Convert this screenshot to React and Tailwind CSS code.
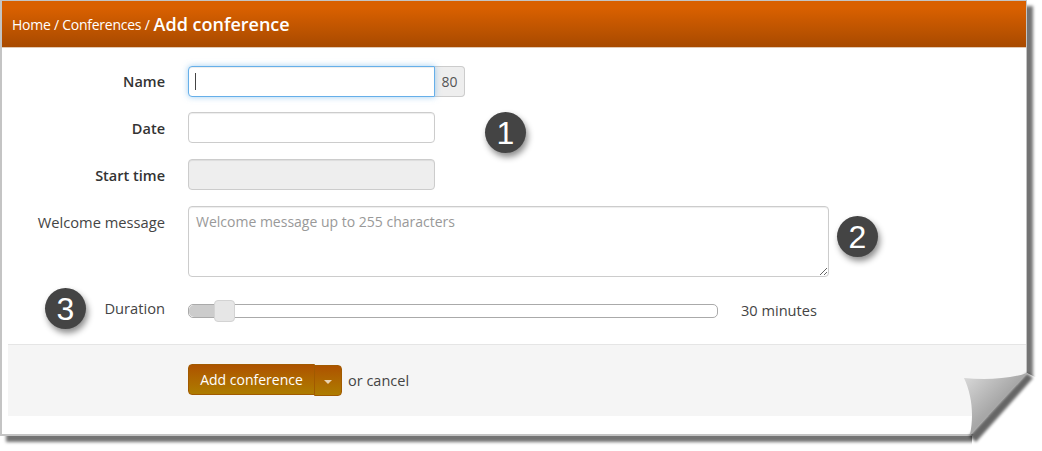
import React from "react";

const font = { fontFamily: '"Open Sans", "Liberation Sans", sans-serif' };

function Badge({ n, className }) {
  return (
    <div
      className={
        "absolute w-[41px] h-[41px] rounded-full bg-[#444444] text-white flex items-center justify-center text-[32px] leading-none shadow-[2px_4px_6px_rgba(0,0,0,0.45)] " +
        className
      }
      style={{ fontFamily: '"Liberation Sans", sans-serif' }}
    >
      {n}
    </div>
  );
}

function Row({ label, bold, className, labelClass = "", children }) {
  return (
    <div className={"flex " + className}>
      <div
        className={
          "w-[163px] shrink-0 text-right " +
          (bold ? "text-[14.5px] font-semibold text-[#333333] " : "text-[14.7px] text-[#444444] ") +
          labelClass
        }
      >
        {label}
      </div>
      <div className="ml-[23px] flex items-start">{children}</div>
    </div>
  );
}

const inputBase =
  "block w-[247px] h-[31px] border outline-none";

export default function App() {
  return (
    <div className="w-[1042px] h-[451px] bg-white overflow-hidden" style={font}>
      <div className="relative w-[1027px] h-[436px] bg-white border-l-2 border-r border-b-2 border-t border-[#c4c4c4] shadow-[6px_6px_3px_rgba(0,0,0,0.55)] flex flex-col">
        <header className="h-[47px] shrink-0 flex items-center pl-[10px] border-b border-[#e3c9b3] bg-gradient-to-b from-[#d96000] from-15% to-[#a84a00] text-white text-[14px] tracking-[-0.25px]">
          <span>Home / Conferences /</span>
          <span className="ml-[4px] text-[18px] font-semibold tracking-[0px]">Add conference</span>
        </header>

        <main className="flex-1 flex flex-col pt-[18px]">
          <Row label="Name" bold className="h-[31px] items-center">
            <div className="relative">
              <input
                readOnly
                className={inputBase + " bg-white border-[#66afe9] rounded-l-[4px] shadow-[inset_0_1px_1px_rgba(0,0,0,0.075),0_0_6px_rgba(102,175,233,0.6)] caret-transparent"}
              />
              <span className="absolute left-[7px] top-[7px] w-px h-[17px] bg-[#444444]" />
            </div>
            <span className="h-[31px] w-[30px] flex items-center justify-center bg-[#eeeeee] border border-l-0 border-[#cccccc] rounded-r-[4px] text-[14px] text-[#555555]">
              80
            </span>
          </Row>

          <Row label="Date" bold className="h-[31px] mt-[15px] items-center" labelClass="mt-[2px]">
            <input readOnly className={inputBase + " bg-white border-[#cccccc] rounded-[4px] shadow-[inset_0_1px_1px_rgba(0,0,0,0.075)]"} />
          </Row>

          <Row label="Start time" bold className="h-[31px] mt-[16px] items-center" labelClass="mt-[2px]">
            <input disabled className={inputBase + " bg-[#eeeeee] border-[#cccccc] rounded-[4px] shadow-[inset_0_1px_1px_rgba(0,0,0,0.075)]"} />
          </Row>

          <Row label="Welcome message" className="mt-[16px] leading-[32px]">
            <textarea
              readOnly
              placeholder="Welcome message up to 255 characters"
              className="block w-[641px] h-[71px] rounded-[4px] border border-[#cccccc] bg-white px-[7px] py-[5px] text-[14px] leading-[20px] outline-none shadow-[inset_0_1px_1px_rgba(0,0,0,0.075)] placeholder:text-[#999999]"
            />
          </Row>

          <Row label="Duration" className="mt-[18px] h-[32px] items-center" labelClass="mb-[5px]">
            <div className="flex items-center">
              <div className="relative w-[530px] h-[14px] rounded-[5px] border border-[#aaaaaa] bg-white">
                <div className="w-[27px] h-full rounded-l-[5px] bg-[#cccccc]" />
                <div className="absolute left-[25px] top-[-5px] w-[21px] h-[22px] rounded-[4px] border border-[#d3d3d3] bg-[#e6e6e6]" />
              </div>
              <span className="ml-[23px] mb-[3px] text-[14.6px] leading-[14px] text-[#444444]">30 minutes</span>
            </div>
          </Row>

          <footer className="mt-[17px] ml-[6px] h-[72px] flex items-center pl-[180px] bg-[#f5f5f5] border-t border-[#e5e5e5]">
            <button className="h-[31px] w-[127px] -mt-[2px] rounded-l-[4px] border border-[#a15a00] bg-gradient-to-b from-[#ad5200] to-[#ad7c00] text-white text-[14px] flex items-center justify-center">
              Add conference
            </button>
            <button className="h-[31px] w-[28px] -ml-px rounded-r-[4px] border border-[#a15a00] bg-gradient-to-b from-[#ad5200] to-[#ad7c00] flex items-center justify-center">
              <span className="w-0 h-0 mt-[2px] border-l-[4px] border-r-[4px] border-t-[4px] border-l-transparent border-r-transparent border-t-[#e9d3b0]" />
            </button>
            <span className="ml-[6px] text-[14.5px] text-[#444444]">or cancel</span>
          </footer>
        </main>

        <Badge n="1" className="left-[483px] top-[111px]" />
        <Badge n="2" className="left-[835px] top-[215px]" />
        <Badge n="3" className="left-[43px] top-[287px]" />

        <svg
          className="absolute left-[948px] top-[364px] pointer-events-none"
          width="94"
          height="87"
          viewBox="950 365 94 87"
        >
          <defs>
            <linearGradient id="curl" x1="0" y1="0" x2="1" y2="1">
              <stop offset="0" stopColor="#dcdcdc" />
              <stop offset="0.5" stopColor="#a8a8a8" />
              <stop offset="1" stopColor="#8a8a8a" />
            </linearGradient>
            <filter id="blur" x="-20%" y="-20%" width="140%" height="140%">
              <feGaussianBlur stdDeviation="1.5" />
            </filter>
          </defs>
          <path d="M972 436 L1027 373 L1035 377 H1044 V452 H972 Z" fill="#ffffff" />
          <path d="M1027 373 L1033 378 L976 442 L969 436 Z" fill="#000000" opacity="0.6" filter="url(#blur)" />
          <path d="M964 378 C985 380 1010 379 1027 373 L970 435 C974 415 972 395 964 378 Z" fill="url(#curl)" />
        </svg>
      </div>
    </div>
  );
}
